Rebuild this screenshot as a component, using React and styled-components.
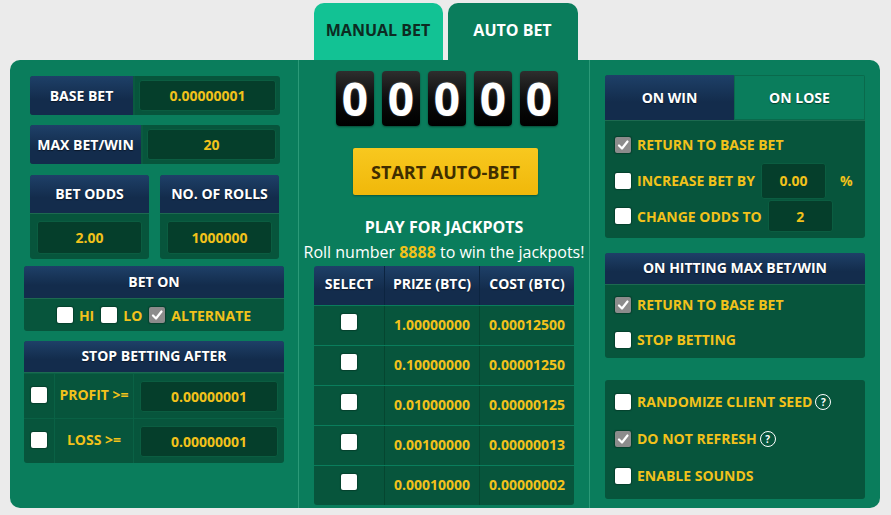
import React from 'react';
import styled, { createGlobalStyle } from 'styled-components';

const GlobalStyle = createGlobalStyle`
  html, body {
    margin: 0;
    padding: 0;
    background: #ebebeb;
    font-family: "Open Sans", "Liberation Sans", sans-serif;
  }
`;

const YELLOW = '#f2c21b';
const NAVY_TOP = '#1e4068';
const NAVY_BOTTOM = '#132c4c';
const DARK = '#07553c';
const INPUT = '#053e2b';
const GREEN = '#0a7d5c';

const Page = styled.div`
  padding-top: 3px;
  width: 891px;
`;

const TabBar = styled.div`
  display: flex;
  justify-content: center;
  gap: 5px;
  height: 57px;
`;

const Tab = styled.div`
  width: ${p => p.$w}px;
  display: flex;
  align-items: center;
  justify-content: center;
  border-radius: 10px 10px 0 0;
  background: ${p => (p.$active ? GREEN : '#12c294')};
  color: ${p => (p.$active ? '#fff' : '#0d2b22')};
  font-size: 16px;
  font-weight: 700;
  padding-bottom: 3px;
  box-sizing: border-box;
`;

const Panel = styled.div`
  margin: 0 11px 0 10px;
  height: 448px;
  border-radius: 10px;
  background: ${GREEN};
  display: grid;
  grid-template-columns: 288px 292px 290px;
  overflow: hidden;
`;

const Column = styled.div`
  padding: ${p => p.$pad};
  box-sizing: border-box;
  display: flex;
  flex-direction: column;
`;

const CenterColumn = styled(Column)`
  border-left: 1px solid #2c9a78;
  border-right: 1px solid #2c9a78;
  align-items: center;
`;

const FieldRow = styled.div`
  display: flex;
  height: 39px;
  margin: 0 ${p => p.$mr}px ${p => p.$mb}px 6px;
  background: ${DARK};
  border-radius: 3px;
  overflow: hidden;
`;

const NavyLabel = styled.div`
  width: ${p => p.$w}px;
  flex: none;
  display: flex;
  align-items: center;
  justify-content: center;
  background: linear-gradient(${NAVY_TOP}, ${NAVY_BOTTOM} 60%);
  color: #fff;
  font-size: 14px;
  font-weight: 700;
  text-shadow: 0 1px 1px rgba(0, 0, 0, 0.5);
  border-right: 2px solid #0a5a40;
`;

const InputCell = styled.div`
  flex: 1;
  display: flex;
  padding: ${p => p.$pad || '4px'};
`;

const Input = styled.div`
  flex: ${p => (p.$w ? 'none' : '1')};
  width: ${p => (p.$w ? `${p.$w}px` : 'auto')};
  height: ${p => (p.$h ? `${p.$h}px` : 'auto')};
  display: flex;
  align-items: center;
  justify-content: center;
  background: ${INPUT};
  border: 1px solid #0b5d41;
  border-radius: 3px;
  color: ${YELLOW};
  font-size: 14px;
  font-weight: 700;
  box-sizing: border-box;
`;

const SplitRow = styled.div`
  display: flex;
  gap: 11px;
  margin: 0 5px 7px 6px;
`;

const SplitBox = styled.div`
  width: 119px;
  height: 84px;
  display: flex;
  flex-direction: column;
  background: ${DARK};
  border-radius: 3px;
  overflow: hidden;
`;

const BoxHeader = styled.div`
  height: ${p => p.$h}px;
  flex: none;
  display: flex;
  align-items: center;
  justify-content: center;
  background: linear-gradient(${NAVY_TOP}, ${NAVY_BOTTOM} 60%);
  color: #fff;
  font-size: 14px;
  font-weight: 700;
  text-shadow: 0 1px 1px rgba(0, 0, 0, 0.5);
  border-bottom: 1px solid #1d6a50;
  box-sizing: border-box;
  padding-bottom: 2px;
`;

const Group = styled.div`
  background: ${DARK};
  border-radius: 3px;
  overflow: hidden;
  margin-bottom: ${p => p.$mb || 0}px;
`;

const GroupBody = styled.div`
  padding: ${p => p.$pad};
`;

const CheckLine = styled.div`
  display: flex;
  align-items: center;
  justify-content: ${p => (p.$center ? 'center' : 'flex-start')};
  gap: ${p => p.$gap || 6}px;
  height: ${p => p.$h}px;
  padding: 0 ${p => p.$px || 0}px;
`;

const YLabel = styled.span`
  color: ${YELLOW};
  font-size: 14px;
  font-weight: 700;
  margin-right: ${p => p.$mr || 0}px;
  margin-left: ${p => p.$ml || 0}px;
  white-space: nowrap;
`;

const Box = styled.span`
  width: 16px;
  height: 16px;
  flex: none;
  border-radius: 2px;
  background: ${p => (p.$on ? '#8c8c8c' : '#fff')};
  box-shadow: 0 0 1px 1px rgba(0, 0, 0, 0.25);
  display: flex;
  align-items: center;
  justify-content: center;
`;

const StopRow = styled.div`
  display: grid;
  grid-template-columns: 30px 79px 1fr;
  height: 44px;
  border-top: 1px solid #0a6145;
`;

const Cell = styled.div`
  display: flex;
  align-items: center;
  justify-content: center;
  border-left: ${p => (p.$line ? '1px solid #0a6145' : 'none')};
  padding: ${p => p.$pad || '0 0 3px'};
`;

const Digits = styled.div`
  display: flex;
  gap: 8px;
  margin: 11px 0 0 6px;
`;

const Digit = styled.div`
  width: 38px;
  height: 55px;
  border-radius: 4px;
  background: linear-gradient(#2e2e2e, #0a0a0a 55%, #000);
  box-shadow: 0 1px 2px rgba(0, 0, 0, 0.4);
  color: #fff;
  font-size: 46px;
  font-weight: 700;
  line-height: 55px;
  text-align: center;
  text-shadow: 0 0 2px rgba(255, 255, 255, 0.3);
`;

const StartButton = styled.button`
  margin: 22px 0 0 3px;
  width: 185px;
  height: 47px;
  border: none;
  border-radius: 2px;
  background: linear-gradient(#f8c81f, #f0b80a);
  color: #3f2d00;
  font-family: inherit;
  font-size: 18px;
  font-weight: 700;
  box-shadow: 0 1px 2px rgba(0, 0, 0, 0.3);
`;

const Title = styled.div`
  margin-top: 21px;
  color: #fff;
  font-size: 16px;
  font-weight: 700;
`;

const Subtitle = styled.div`
  margin-top: 3px;
  color: #fff;
  font-size: 16px;

  b {
    color: ${YELLOW};
  }
`;

const Table = styled.div`
  margin-top: 3px;
  width: 260px;
  display: grid;
  grid-template-columns: 70px 95px 95px;
  grid-auto-rows: 39px;
  row-gap: 1px;
  background: ${GREEN};
  border-radius: 3px;
  overflow: hidden;
`;

const TH = styled.div`
  display: flex;
  align-items: center;
  justify-content: center;
  background: linear-gradient(${NAVY_TOP}, ${NAVY_BOTTOM} 60%);
  color: #fff;
  font-size: 14px;
  font-weight: 700;
  text-shadow: 0 1px 1px rgba(0, 0, 0, 0.5);
  border-left: ${p => (p.$first ? 'none' : '1px solid #0c2440')};
  padding-bottom: 4px;
`;

const TD = styled.div`
  display: flex;
  align-items: center;
  justify-content: center;
  background: ${DARK};
  color: ${YELLOW};
  font-size: 14px;
  font-weight: 700;
  border-left: ${p => (p.$first ? 'none' : '1px solid #054630')};
  padding-bottom: ${p => (p.$first ? '8px' : '2px')};
`;

const SubTabs = styled.div`
  display: flex;
  height: 45px;
  border-bottom: 1px solid #1d6a50;
`;

const SubTab = styled.div`
  flex: 1;
  display: flex;
  align-items: center;
  justify-content: center;
  background: ${p => (p.$active ? `linear-gradient(${NAVY_TOP}, ${NAVY_BOTTOM} 60%)` : GREEN)};
  border: ${p => (p.$active ? 'none' : '1px solid #0a6a4c')};
  color: #fff;
  font-size: 14px;
  font-weight: 700;
  text-shadow: 0 1px 1px rgba(0, 0, 0, 0.5);
`;

const Help = styled.span`
  width: 14px;
  height: 14px;
  border: 1.5px solid #fff;
  border-radius: 50%;
  color: #fff;
  font-size: 10px;
  font-weight: 700;
  display: inline-flex;
  align-items: center;
  justify-content: center;
  margin-left: -3px;
`;

function CheckBox({ on }) {
  return (
    <Box $on={on}>
      {on && (
        <svg width="12" height="12" viewBox="0 0 12 12">
          <path d="M2 6.5 L5 9.5 L10.5 2.5" fill="none" stroke="#fff" strokeWidth="2.2" strokeLinecap="round" strokeLinejoin="round" />
        </svg>
      )}
    </Box>
  );
}

const jackpots = [
  ['1.00000000', '0.00012500'],
  ['0.10000000', '0.00001250'],
  ['0.01000000', '0.00000125'],
  ['0.00100000', '0.00000013'],
  ['0.00010000', '0.00000002'],
];

export default function App() {
  return (
    <Page>
      <GlobalStyle />
      <TabBar>
        <Tab $w={129}>MANUAL BET</Tab>
        <Tab $w={130} $active>AUTO BET</Tab>
      </TabBar>
      <Panel>
        <Column $pad="16px 14px 0 14px">
          <FieldRow $mr={4} $mb={10}>
            <NavyLabel $w={103}>BASE BET</NavyLabel>
            <InputCell><Input>0.00000001</Input></InputCell>
          </FieldRow>
          <FieldRow $mr={4} $mb={11}>
            <NavyLabel $w={111}>MAX BET/WIN</NavyLabel>
            <InputCell><Input>20</Input></InputCell>
          </FieldRow>
          <SplitRow>
            <SplitBox>
              <BoxHeader $h={39}>BET ODDS</BoxHeader>
              <InputCell $pad="7px 7px 5px"><Input>2.00</Input></InputCell>
            </SplitBox>
            <SplitBox>
              <BoxHeader $h={39}>NO. OF ROLLS</BoxHeader>
              <InputCell $pad="7px 7px 5px"><Input>1000000</Input></InputCell>
            </SplitBox>
          </SplitRow>
          <Group $mb={10}>
            <BoxHeader $h={33}>BET ON</BoxHeader>
            <CheckLine $h={32} $center $gap={6}>
              <CheckBox />
              <YLabel $mr={1}>HI</YLabel>
              <CheckBox />
              <YLabel $mr={1}>LO</YLabel>
              <CheckBox on />
              <YLabel>ALTERNATE</YLabel>
            </CheckLine>
          </Group>
          <Group>
            <BoxHeader $h={32}>STOP BETTING AFTER</BoxHeader>
            <StopRow>
              <Cell><CheckBox /></Cell>
              <Cell $line><YLabel>PROFIT &gt;=</YLabel></Cell>
              <Cell $line $pad="6px"><Input $h={31}>0.00000001</Input></Cell>
            </StopRow>
            <StopRow>
              <Cell><CheckBox /></Cell>
              <Cell $line><YLabel>LOSS &gt;=</YLabel></Cell>
              <Cell $line $pad="6px"><Input $h={31}>0.00000001</Input></Cell>
            </StopRow>
          </Group>
        </Column>

        <CenterColumn $pad="0">
          <Digits>
            {[0, 0, 0, 0, 0].map((d, i) => <Digit key={i}>{d}</Digit>)}
          </Digits>
          <StartButton>START AUTO-BET</StartButton>
          <Title>PLAY FOR JACKPOTS</Title>
          <Subtitle>Roll number <b>8888</b> to win the jackpots!</Subtitle>
          <Table>
            <TH $first>SELECT</TH>
            <TH>PRIZE (BTC)</TH>
            <TH>COST (BTC)</TH>
            {jackpots.map(([prize, cost]) => (
              <React.Fragment key={prize}>
                <TD $first><CheckBox /></TD>
                <TD>{prize}</TD>
                <TD>{cost}</TD>
              </React.Fragment>
            ))}
          </Table>
        </CenterColumn>

        <Column $pad="15px 15px 0 15px">
          <Group $mb={15}>
            <SubTabs>
              <SubTab $active>ON WIN</SubTab>
              <SubTab>ON LOSE</SubTab>
            </SubTabs>
            <GroupBody $pad="6px 0 5px">
              <CheckLine $h={35} $px={10}>
                <CheckBox on />
                <YLabel>RETURN TO BASE BET</YLabel>
              </CheckLine>
              <CheckLine $h={37} $px={10}>
                <CheckBox />
                <YLabel>INCREASE BET BY</YLabel>
                <Input $w={65} $h={36}>0.00</Input>
                <YLabel $ml={8}>%</YLabel>
              </CheckLine>
              <CheckLine $h={34} $px={10}>
                <CheckBox />
                <YLabel>CHANGE ODDS TO</YLabel>
                <Input $w={65} $h={32}>2</Input>
              </CheckLine>
            </GroupBody>
          </Group>
          <Group $mb={22}>
            <BoxHeader $h={32}>ON HITTING MAX BET/WIN</BoxHeader>
            <GroupBody $pad="2px 0 1px">
              <CheckLine $h={35} $px={10}>
                <CheckBox on />
                <YLabel>RETURN TO BASE BET</YLabel>
              </CheckLine>
              <CheckLine $h={35} $px={10}>
                <CheckBox />
                <YLabel>STOP BETTING</YLabel>
              </CheckLine>
            </GroupBody>
          </Group>
          <Group>
            <GroupBody $pad="3px 0 5px">
              <CheckLine $h={37} $px={10}>
                <CheckBox />
                <YLabel>RANDOMIZE CLIENT SEED</YLabel>
                <Help>?</Help>
              </CheckLine>
              <CheckLine $h={37} $px={10}>
                <CheckBox on />
                <YLabel>DO NOT REFRESH</YLabel>
                <Help>?</Help>
              </CheckLine>
              <CheckLine $h={37} $px={10}>
                <CheckBox />
                <YLabel>ENABLE SOUNDS</YLabel>
              </CheckLine>
            </GroupBody>
          </Group>
        </Column>
      </Panel>
    </Page>
  );
}
